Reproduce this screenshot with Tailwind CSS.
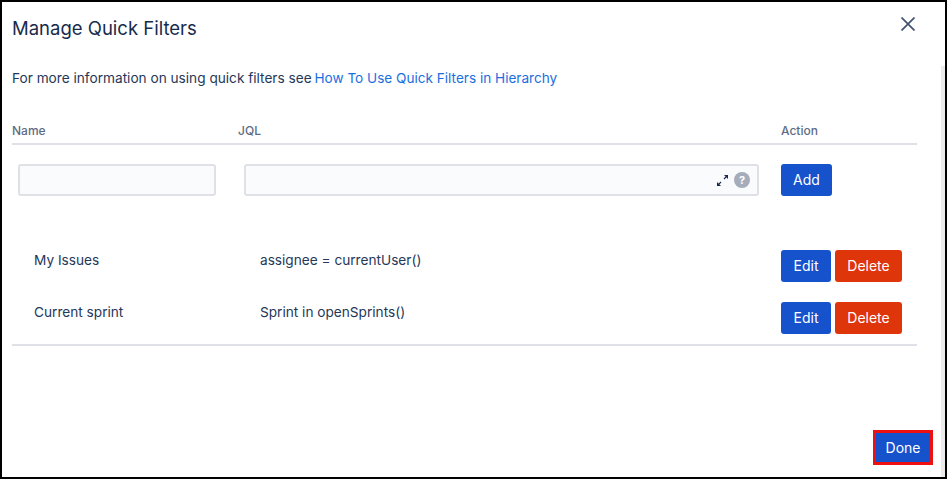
<!DOCTYPE html>
<html lang="en">
<head>
    <meta charset="UTF-8">
    <title>Manage Quick Filters</title>
    <script src="https://cdn.jsdelivr.net/npm/@tailwindcss/browser@4"></script>
</head>
<body class="bg-black">
    <div class="relative w-[947px] h-[479px] border-2 border-black bg-white font-['Inter',sans-serif] text-[#172b4d] overflow-hidden">
        <!-- scrollbar track -->
        <div class="absolute right-0 top-[64px] bottom-0 w-[4px] bg-[#ebebee]"></div>

        <div class="flex items-start justify-between pl-[10px] pr-[30px] pt-[14px] h-[40px]">
            <h1 class="text-[18.5px] leading-[24px] font-normal">Manage Quick Filters</h1>
            <button class="mt-px text-[#42526e]">
                <svg class="block" width="14" height="14" viewBox="0 0 14 14" fill="none" stroke="currentColor" stroke-width="1.7"><path d="M0.5 0.5l13 13M13.5 0.5l-13 13"/></svg>
            </button>
        </div>

        <p class="mt-[26px] pl-[10px] text-[13.65px] leading-[20px] text-[#253858]">For more information on using quick filters see <a class="text-[#1a6fe0] text-[13.58px] -ml-px">How To Use Quick Filters in Hierarchy</a></p>

        <div class="ml-[10px] w-[905px] mt-[34px]">
            <div class="flex h-[23px] pt-px border-b-2 border-[#dfe1e6] text-[12px] leading-[16px] font-medium text-[#5e6c84]">
                <div class="w-[226px]">Name</div>
                <div class="w-[543px]">JQL</div>
                <div>Action</div>
            </div>

            <div class="flex items-center mt-[19px] h-[32px]">
                <input class="ml-[6px] w-[198px] h-[32px] rounded-[3px] border-2 border-[#dfe1e6] bg-[#fafbfc]">
                <div class="ml-[28px] w-[515px] h-[32px] rounded-[3px] border-2 border-[#dfe1e6] bg-[#fafbfc] flex items-center justify-end pr-[7px] gap-[5px]">
                    <svg width="13" height="13" viewBox="0 0 13 13" fill="none" stroke="#172b4d" stroke-width="1.2"><path d="M8 5l2.6-2.6M2.4 10.6L5 8"/><path d="M8 1h4v4zM1 8v4h4z" fill="#172b4d" stroke="none"/></svg>
                    <span class="w-[16px] h-[16px] rounded-full bg-[#a5adba] text-white text-[11px] leading-[16px] font-bold text-center">?</span>
                </div>
                <button class="ml-[22px] w-[51px] h-[32px] pb-px rounded-[3px] bg-[#1652cc] text-white text-[14px]">Add</button>
            </div>

            <div class="mt-[54px] flex items-start h-[32px] text-[13.65px] text-[#253858]">
                <div class="w-[226px] pl-[22px] leading-[20px]">My Issues</div>
                <div class="w-[543px] pl-[22px] leading-[20px]">assignee = currentUser()</div>
                <button class="w-[50px] h-[32px] pb-px rounded-[3px] bg-[#1652cc] text-white text-[14px]">Edit</button>
                <button class="ml-[4px] w-[67px] h-[32px] pb-px rounded-[3px] bg-[#de350b] text-white text-[14px]">Delete</button>
            </div>
            <div class="mt-[20px] flex items-start h-[32px] text-[13.65px] text-[#253858]">
                <div class="w-[226px] pl-[22px] leading-[20px]">Current sprint</div>
                <div class="w-[543px] pl-[22px] leading-[20px]">Sprint in openSprints()</div>
                <button class="w-[50px] h-[32px] pb-px rounded-[3px] bg-[#1652cc] text-white text-[14px]">Edit</button>
                <button class="ml-[4px] w-[67px] h-[32px] pb-px rounded-[3px] bg-[#de350b] text-white text-[14px]">Delete</button>
            </div>
            <div class="mt-[10px] border-b-2 border-[#dfe1e6]"></div>
        </div>

        <div class="flex justify-end mt-[84px] pr-[12px]">
            <button class="w-[60px] h-[35px] pb-px border-[3px] border-[#ee1111] bg-[#1652cc] text-white text-[14px]">Done</button>
        </div>
    </div>
</body>
</html>
